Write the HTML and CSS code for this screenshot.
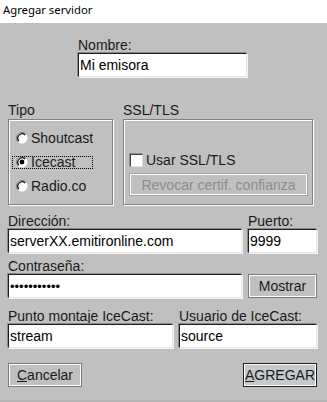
FILE: index.html
```html
<!DOCTYPE html>
<html lang="es">
<head>
    <meta charset="UTF-8">
    <meta name="viewport" content="width=device-width, initial-scale=1.0">
    <title>Agregar servidor</title>
    <link rel="stylesheet" href="styles.css">
</head>
<body>

<div class="window">
    <div class="titlebar">Agregar servidor</div>

    <div class="dialog">
        <!-- Nombre -->
        <div class="name-block">
            <div class="label">Nombre:</div>
            <input class="field name-field" type="text" value="Mi emisora">
        </div>

        <!-- Tipo / SSL -->
        <div class="groups">
            <div class="group-col">
                <div class="label">Tipo</div>
                <div class="group tipo">
                    <div class="radio">
                        <span class="radio-inner">
                            <svg class="radio-icon" width="12" height="12" viewBox="0 0 12 12">
                                <circle cx="6" cy="6" r="5.5" fill="#fff"/>
                                <path d="M2.1 9.9 A5.5 5.5 0 0 1 9.9 2.1" stroke="#7a7a7a" fill="none"/>
                                <path d="M2.9 9.1 A4.4 4.4 0 0 1 9.1 2.9" stroke="#111" stroke-width="1.3" fill="none"/>
                            </svg>
                            Shoutcast
                        </span>
                    </div>
                    <div class="radio">
                        <span class="radio-inner focused">
                            <svg class="radio-icon" width="12" height="12" viewBox="0 0 12 12">
                                <circle cx="6" cy="6" r="5.5" fill="#fff"/>
                                <path d="M2.1 9.9 A5.5 5.5 0 0 1 9.9 2.1" stroke="#7a7a7a" fill="none"/>
                                <path d="M2.9 9.1 A4.4 4.4 0 0 1 9.1 2.9" stroke="#111" stroke-width="1.3" fill="none"/>
                                <circle cx="6" cy="6" r="2.4" fill="#000"/>
                            </svg>
                            Icecast
                        </span>
                    </div>
                    <div class="radio">
                        <span class="radio-inner">
                            <svg class="radio-icon" width="12" height="12" viewBox="0 0 12 12">
                                <circle cx="6" cy="6" r="5.5" fill="#fff"/>
                                <path d="M2.1 9.9 A5.5 5.5 0 0 1 9.9 2.1" stroke="#7a7a7a" fill="none"/>
                                <path d="M2.9 9.1 A4.4 4.4 0 0 1 9.1 2.9" stroke="#111" stroke-width="1.3" fill="none"/>
                            </svg>
                            Radio.co
                        </span>
                    </div>
                </div>
            </div>

            <div class="group-col">
                <div class="label">SSL/TLS</div>
                <div class="group ssl">
                    <div class="check-row">
                        <span class="checkbox"></span>
                        Usar SSL/TLS
                    </div>
                    <button class="btn btn-disabled" disabled>Revocar certif. confianza</button>
                </div>
            </div>
        </div>

        <!-- Dirección / Puerto / Contraseña -->
        <div class="server-grid">
            <div class="label">Dirección:</div>
            <div class="label">Puerto:</div>
            <input class="field" type="text" value="serverXX.emitironline.com">
            <input class="field" type="text" value="9999">
            <div class="label label-gap">Contraseña:</div>
            <div></div>
            <input class="field pass" type="text" value="•••••••••••">
            <button class="btn">Mostrar</button>
        </div>

        <!-- IceCast -->
        <div class="icecast-grid">
            <div class="label">Punto montaje IceCast:</div>
            <div class="label">Usuario de IceCast:</div>
            <input class="field" type="text" value="stream">
            <input class="field" type="text" value="source">
        </div>

        <!-- Botones -->
        <div class="actions">
            <button class="btn btn-action"><u>C</u>ancelar</button>
            <button class="btn btn-action btn-default"><u>A</u>GREGAR</button>
        </div>
    </div>
</div>

</body>
</html>
```

FILE: styles.css
```css
/* Base */
body {
    margin: 0;
    font-family: "Liberation Sans", Arial, sans-serif;
    font-size: 14px;
    color: #1a1a1a;
}

.window {
    width: 327px;
    height: 402px;
    background-color: #c0c0c0;
    box-sizing: border-box;
    border-bottom: 2px solid #b4b4b4;
}

/* Title Bar */
.titlebar {
    height: 23px;
    line-height: 20px;
    padding-left: 3px;
    background-color: #fff;
    font-family: "Noto Sans", sans-serif;
    font-size: 11.3px;
    color: #000;
}

.dialog {
    padding: 14px 10px 0 8px;
}

.label {
    height: 16px;
    line-height: 16px;
    white-space: nowrap;
}

/* Text Fields */
.field {
    display: block;
    box-sizing: border-box;
    width: 100%;
    height: 24px;
    margin: 0;
    padding: 0 1px;
    font-family: inherit;
    font-size: 14px;
    color: #000;
    background-color: #fff;
    border: 1px solid;
    border-color: #1e1e1e #e6e6e6 #e6e6e6 #1e1e1e;
    box-shadow: -1px -1px 0 #8a8a8a, 1px 1px 0 #f4f4f4;
    outline: none;
}

.pass {
    font-size: 13px;
}

.name-block {
    margin-left: 70px;
    width: 169px;
}

/* Group Boxes */
.groups {
    display: flex;
    gap: 10px;
    margin-top: 25px;
}

.group-col .label {
    margin-bottom: 1px;
}

.group {
    box-sizing: border-box;
    height: 86px;
    border: 1px solid #808080;
    box-shadow: inset 1px 1px 0 #fff, 1px 1px 0 #fff;
}

.tipo {
    width: 105px;
    padding: 6px 0 0 4px;
}

.radio {
    height: 24px;
    display: flex;
    align-items: center;
}

.radio-inner {
    display: flex;
    align-items: center;
    gap: 3px;
    width: 76px;
    height: 11px;
    padding-left: 3px;
}

.radio-inner.focused {
    outline: 1px dotted #000;
}

.radio-icon {
    flex: none;
}

.ssl {
    width: 190px;
    display: flex;
    flex-direction: column;
    justify-content: flex-end;
    padding: 0 4px 8px 5px;
}

.check-row {
    display: flex;
    align-items: center;
    gap: 3px;
    height: 16px;
    margin: 0 0 5px 1px;
}

.checkbox {
    width: 13px;
    height: 13px;
    box-sizing: border-box;
    background-color: #fff;
    border: 1px solid;
    border-color: #404040 #e0e0e0 #e0e0e0 #404040;
    box-shadow: -1px -1px 0 #909090;
}

/* Buttons */
.btn {
    box-sizing: border-box;
    height: 24px;
    margin: 0;
    padding: 0;
    font-family: inherit;
    font-size: 14px;
    color: #1a1a1a;
    background-color: #c0c0c0;
    border: 1px solid #7a7a7a;
    box-shadow: inset 1px 1px 0 #fff, inset -1px -1px 0 #fff;
    cursor: pointer;
}

.btn-disabled {
    height: 23px;
    color: #8c8c8c;
    border-color: #a4a4a4;
    cursor: default;
}

.server-grid {
    display: grid;
    grid-template-columns: 234px 69px;
    column-gap: 6px;
    margin-top: 8px;
}

.label-gap {
    margin-top: 5px;
}

.icecast-grid {
    display: grid;
    grid-template-columns: 165px 138px;
    column-gap: 6px;
    margin-top: 10px;
}

.actions {
    display: flex;
    justify-content: space-between;
    margin-top: 15px;
    width: 309px;
}

.btn-action {
    width: 74px;
}

.btn-default {
    border-color: #202020;
    background-color: #c5c9cd;
}
```
